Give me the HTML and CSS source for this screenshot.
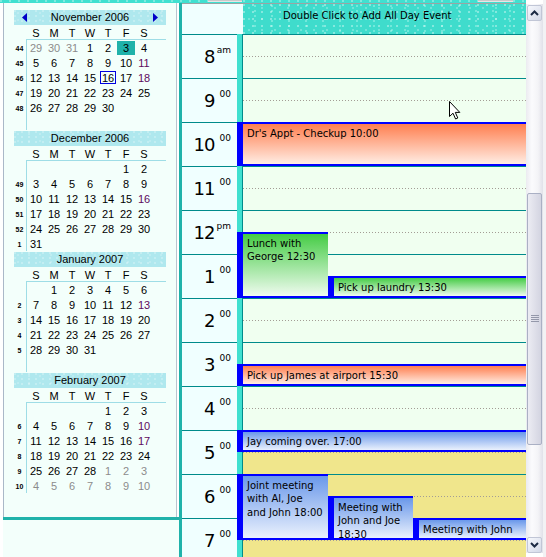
FILE: index.html
```html
<!DOCTYPE html>
<html>
<head>
<meta charset="utf-8">
<link rel="stylesheet" href="styles.css">
</head>
<body>
<div class="app">
  <div class="main">
    <div class="topstrip"><span class="tab tab1"></span><span class="tab tab2"></span></div>
    <div class="cols">
      <aside class="side">
        <div class="side-panel">
          <div class="month">
            <div class="mhead nav">
              <svg class="arr" width="6" height="9" viewBox="0 0 6 9"><polygon points="5,0 0,4.5 5,9" fill="#0000c8"/></svg>
              <span class="mtitle">November 2006</span>
              <svg class="arr" width="6" height="9" viewBox="0 0 6 9"><polygon points="1,0 6,4.5 1,9" fill="#0000c8"/></svg>
            </div>
            <div class="mnames"><span>S</span><span>M</span><span>T</span><span>W</span><span>T</span><span>F</span><span>S</span></div>
            <div class="mbody">
              <div class="wk"><span>44</span><span>45</span><span>46</span><span>47</span><span>48</span><span></span></div>
              <div class="days">
                <span class="d g">29</span><span class="d g">30</span><span class="d g">31</span><span class="d">1</span><span class="d">2</span><span class="d sel">3</span><span class="d">4</span>
                <span class="d">5</span><span class="d">6</span><span class="d">7</span><span class="d">8</span><span class="d">9</span><span class="d">10</span><span class="d p">11</span>
                <span class="d">12</span><span class="d">13</span><span class="d">14</span><span class="d">15</span><span class="d today">16</span><span class="d">17</span><span class="d p">18</span>
                <span class="d">19</span><span class="d">20</span><span class="d">21</span><span class="d">22</span><span class="d">23</span><span class="d">24</span><span class="d">25</span>
                <span class="d">26</span><span class="d">27</span><span class="d">28</span><span class="d">29</span><span class="d">30</span><span class="d"></span><span class="d"></span>
              </div>
            </div>
          </div>

          <div class="month">
            <div class="mhead"><span class="mtitle">December 2006</span></div>
            <div class="mnames"><span>S</span><span>M</span><span>T</span><span>W</span><span>T</span><span>F</span><span>S</span></div>
            <div class="mbody">
              <div class="wk"><span></span><span>49</span><span>50</span><span>51</span><span>52</span><span>1</span></div>
              <div class="days">
                <span class="d"></span><span class="d"></span><span class="d"></span><span class="d"></span><span class="d"></span><span class="d">1</span><span class="d">2</span>
                <span class="d">3</span><span class="d">4</span><span class="d">5</span><span class="d">6</span><span class="d">7</span><span class="d">8</span><span class="d">9</span>
                <span class="d">10</span><span class="d">11</span><span class="d">12</span><span class="d">13</span><span class="d">14</span><span class="d">15</span><span class="d p">16</span>
                <span class="d">17</span><span class="d">18</span><span class="d">19</span><span class="d">20</span><span class="d">21</span><span class="d">22</span><span class="d">23</span>
                <span class="d">24</span><span class="d">25</span><span class="d">26</span><span class="d">27</span><span class="d">28</span><span class="d">29</span><span class="d">30</span>
                <span class="d">31</span>
              </div>
            </div>
          </div>

          <div class="month">
            <div class="mhead"><span class="mtitle">January 2007</span></div>
            <div class="mnames"><span>S</span><span>M</span><span>T</span><span>W</span><span>T</span><span>F</span><span>S</span></div>
            <div class="mbody">
              <div class="wk"><span></span><span>2</span><span>3</span><span>4</span><span>5</span><span></span></div>
              <div class="days">
                <span class="d"></span><span class="d">1</span><span class="d">2</span><span class="d">3</span><span class="d">4</span><span class="d">5</span><span class="d">6</span>
                <span class="d">7</span><span class="d">8</span><span class="d">9</span><span class="d">10</span><span class="d">11</span><span class="d">12</span><span class="d p">13</span>
                <span class="d">14</span><span class="d">15</span><span class="d">16</span><span class="d">17</span><span class="d">18</span><span class="d">19</span><span class="d">20</span>
                <span class="d">21</span><span class="d">22</span><span class="d">23</span><span class="d">24</span><span class="d">25</span><span class="d">26</span><span class="d">27</span>
                <span class="d">28</span><span class="d">29</span><span class="d">30</span><span class="d">31</span>
              </div>
            </div>
          </div>

          <div class="month">
            <div class="mhead"><span class="mtitle">February 2007</span></div>
            <div class="mnames"><span>S</span><span>M</span><span>T</span><span>W</span><span>T</span><span>F</span><span>S</span></div>
            <div class="mbody">
              <div class="wk"><span></span><span>6</span><span>7</span><span>8</span><span>9</span><span>10</span></div>
              <div class="days">
                <span class="d"></span><span class="d"></span><span class="d"></span><span class="d"></span><span class="d">1</span><span class="d">2</span><span class="d">3</span>
                <span class="d">4</span><span class="d">5</span><span class="d">6</span><span class="d">7</span><span class="d">8</span><span class="d">9</span><span class="d p">10</span>
                <span class="d">11</span><span class="d">12</span><span class="d">13</span><span class="d">14</span><span class="d">15</span><span class="d">16</span><span class="d p">17</span>
                <span class="d">18</span><span class="d">19</span><span class="d">20</span><span class="d">21</span><span class="d">22</span><span class="d">23</span><span class="d">24</span>
                <span class="d">25</span><span class="d">26</span><span class="d">27</span><span class="d">28</span><span class="d g">1</span><span class="d g">2</span><span class="d g">3</span>
                <span class="d g">4</span><span class="d g">5</span><span class="d g">6</span><span class="d g">7</span><span class="d g">8</span><span class="d g">9</span><span class="d g">10</span>
              </div>
            </div>
          </div>
        </div>
        <div class="side-split"></div>
        <div class="side-bottom"></div>
      </aside>

      <section class="day">
        <div class="day-head">
          <div class="corner"></div>
          <div class="allday">Double Click to Add All Day Event</div>
        </div>
        <div class="day-body">
          <div class="times">
            <div class="hr"><span class="h">8</span><span class="s">am</span></div>
            <div class="hr"><span class="h">9</span><span class="s">00</span></div>
            <div class="hr"><span class="h">10</span><span class="s">00</span></div>
            <div class="hr"><span class="h">11</span><span class="s">00</span></div>
            <div class="hr"><span class="h">12</span><span class="s">pm</span></div>
            <div class="hr"><span class="h">1</span><span class="s">00</span></div>
            <div class="hr"><span class="h">2</span><span class="s">00</span></div>
            <div class="hr"><span class="h">3</span><span class="s">00</span></div>
            <div class="hr"><span class="h">4</span><span class="s">00</span></div>
            <div class="hr"><span class="h">5</span><span class="s">00</span></div>
            <div class="hr"><span class="h">6</span><span class="s">00</span></div>
            <div class="hr"><span class="h">7</span><span class="s">00</span></div>
          </div>
          <div class="bar"></div>
          <div class="grid">
            <div class="slot"></div>
            <div class="slot"></div>
            <div class="slot"></div>
            <div class="slot"></div>
            <div class="slot"></div>
            <div class="slot"></div>
            <div class="slot"></div>
            <div class="slot"></div>
            <div class="slot"></div>
            <div class="slot off"></div>
            <div class="slot off"></div>
            <div class="slot off"></div>
          </div>
          <div class="appts">
            <div class="appt orange" style="top:88px;left:0;width:289px;height:44px">Dr's Appt - Checkup 10:00</div>
            <div class="appt green" style="top:198px;left:0;width:91px;height:66px">Lunch with<br>George 12:30</div>
            <div class="appt green" style="top:242px;left:91px;width:198px;height:22px">Pick up laundry 13:30</div>
            <div class="appt orange" style="top:330px;left:0;width:289px;height:22px">Pick up James at airport 15:30</div>
            <div class="appt blue" style="top:396px;left:0;width:289px;height:22px">Jay coming over. 17:00</div>
            <div class="appt blue" style="top:440px;left:0;width:91px;height:66px">Joint meeting<br>with Al, Joe<br>and John 18:00</div>
            <div class="appt blue" style="top:462px;left:91px;width:85px;height:44px">Meeting with<br>John and Joe<br>18:30</div>
            <div class="appt blue" style="top:484px;left:176px;width:113px;height:22px">Meeting with John</div>
          </div>
          <svg class="cursor" width="13" height="20" viewBox="0 0 13 20"><path d="M0.5,0.5 L0.5,15.5 L4,12.2 L6.6,18 L8.8,17 L6.3,11.4 L10.8,11.4 Z" fill="#fff" stroke="#000" stroke-width="1" stroke-linejoin="miter"/></svg>
        </div>
      </section>
    </div>
  </div>

  <div class="vscroll">
    <div class="sb-btn"><svg width="9" height="6" viewBox="0 0 9 6"><polyline points="1,5 4.5,1.5 8,5" fill="none" stroke="#1c2a44" stroke-width="2"/></svg></div>
    <div class="sb-gap1"></div>
    <div class="sb-thumb"><svg width="8" height="8" viewBox="0 0 8 8"><path d="M0 0.5H8M0 2.5H8M0 4.5H8M0 6.5H8" stroke="#9498aa" stroke-width="1"/></svg></div>
    <div class="sb-gap2"></div>
    <div class="sb-btn"><svg width="9" height="6" viewBox="0 0 9 6"><polyline points="1,1 4.5,4.5 8,1" fill="none" stroke="#1c2a44" stroke-width="2"/></svg></div>
  </div>
  <div class="edge"></div>
</div>
</body>
</html>
```

FILE: styles.css
```css
* { box-sizing: border-box; }
html, body { margin: 0; padding: 0; }
body {
  width: 546px;
  height: 557px;
  overflow: hidden;
  background: #fff;
  font-family: "Liberation Sans", Arial, sans-serif;
  color: #000;
}

.app { display: flex; height: 557px; }
.main { width: 526px; display: flex; flex-direction: column; }

.topstrip {
  height: 3px;
  display: flex;
  background-color: #40e0d0;
  background-image:
    radial-gradient(circle at 1px 1px, rgba(255,255,255,.45) 0.6px, transparent 1px);
  background-size: 9px 3px;
  background-position: 0 0;
}
.tab { height: 2px; background: #c9c9c9; border-bottom: 1px solid #e6e6e6; }
.tab1 { margin-left: 208px; width: 34px; }
.tab2 { margin-left: 236px; width: 35px; }

.cols { flex: 1; display: flex; min-height: 0; }

/* ---------- side calendars ---------- */
.side { width: 179px; padding-left: 3px; display: flex; flex-direction: column; }
.side-panel {
  width: 174px;
  height: 514px;
  border-left: 1px solid #aab8c8;
  border-right: 1px solid #b8c4d0;
  background: #f3fffb;
  padding: 7px 0 0 10px;
}
.side-split { height: 3px; background: #20b2aa; }
.side-bottom { flex: 1; background: #f3fffb; }

.month { width: 152px; height: 120px; margin-bottom: 1px; }
.mhead {
  height: 15px;
  display: flex;
  align-items: flex-start;
  justify-content: center;
  font-size: 11px;
  line-height: 14px;
  background-color: #afe8ee;
  background-image:
    radial-gradient(circle at 1px 1px, rgba(255,255,255,.35) 0.6px, transparent 1px),
    radial-gradient(circle at 1px 1px, rgba(255,255,255,.25) 0.6px, transparent 1px);
  background-size: 7px 5px, 11px 7px;
  background-position: 0 0, 3px 2px;
}
.mhead.nav { justify-content: space-between; padding: 0 8px; }
.arr { margin-top: 3px; display: block; }

.mnames {
  margin-left: 12px;
  padding-left: 1px;
  height: 15px;
  border-bottom: 1px solid #9edde6;
  display: grid;
  grid-template-columns: repeat(7, 18px);
  font-size: 11px;
  line-height: 16px;
  text-align: center;
}

.mbody { display: flex; height: 90px; }
.wk {
  width: 12px;
  display: grid;
  grid-auto-rows: 15px;
  font-weight: bold;
  font-size: 7px;
  line-height: 17px;
  text-align: center;
  padding-right: 1px;
}
.days {
  width: 140px;
  border-left: 1px solid #9edde6;
  display: grid;
  grid-template-columns: repeat(7, 18px);
  grid-auto-rows: 15px;
  align-content: start;
  font-size: 11px;
  text-align: center;
}
.d { height: 15px; padding-top: 1px; line-height: 15px; }
.d.g { color: #8c8c8c; }
.d.p { color: #5e0a5e; }
.d.sel { background: #20b2aa; background-clip: content-box; }
.d.today { outline: 1px solid #0000e0; outline-offset: -2px; }

/* ---------- day view ---------- */
.day {
  flex: 1;
  display: flex;
  flex-direction: column;
  border-left: 3px solid #20b2aa;
  min-height: 0;
}
.day-head { height: 31px; border-top: 1px solid #9aa4a4; display: flex; }
.corner {
  width: 61px;
  background: #f0ffff;
}
.allday {
  flex: 1;
  font-family: "DejaVu Sans", Verdana, sans-serif;
  font-size: 10px;
  line-height: 13px;
  padding: 5px 0 0 40px;
  color: #000;
  background-color: #3fdccc;
  background-image:
    radial-gradient(circle at 1px 1px, rgba(255,255,255,.5) 0.6px, transparent 1px),
    radial-gradient(circle at 1px 1px, rgba(255,255,255,.35) 0.6px, transparent 1px),
    radial-gradient(circle at 1px 1px, rgba(200,255,245,.5) 0.6px, transparent 1px);
  background-size: 9px 7px, 13px 11px, 17px 5px;
  background-position: 0 0, 5px 3px, 11px 1px;
}

.day-body { flex: 1; position: relative; display: flex; overflow: hidden; }

.times { width: 55px; background: #f0ffff; }
.hr {
  height: 44px;
  border-top: 1px solid #008b8b;
  display: flex;
  justify-content: flex-end;
  align-items: flex-start;
  padding: 11px 6px 0 0;
  font-family: "DejaVu Sans", Verdana, sans-serif;
}
.h { font-size: 18px; line-height: 18px; letter-spacing: -1px; margin-top: 2px; margin-right: 0.5px; }
.s { font-size: 9px; line-height: 9px; width: 16px; text-align: right; }

.bar { width: 6px; background: #40e0d0; border-right: 1px solid #008b8b; }

.grid { flex: 1; }
.slot {
  height: 44px;
  border-top: 1px solid #008b8b;
  background-color: #f0fff0;
  background-image: linear-gradient(to right, #a39d95 1px, transparent 1px);
  background-size: 3px 1px;
  background-position: 0 21px;
  background-repeat: repeat-x;
}
.slot.off { background-color: #f0e68c; }

.appts { position: absolute; left: 55px; top: 0; right: 0; bottom: 0; }
.appt {
  position: absolute;
  border-top: 2px solid #0000ff;
  border-bottom: 2px solid #0000ff;
  border-left: 6px solid #0000ff;
  padding: 3px 4px 0 4px;
  font-family: "DejaVu Sans", Verdana, sans-serif;
  font-size: 10px;
  line-height: 13.3px;
  color: #000;
  white-space: nowrap;
  overflow: hidden;
}
.orange { background: linear-gradient(#ff7f50, #ffede4); }
.green { background: linear-gradient(#45cc45, #effbef); }
.blue { background: linear-gradient(#6a98ea, #eaf1fd); }

.cursor { position: absolute; left: 267px; top: 67px; }

/* ---------- scrollbar ---------- */
.vscroll {
  width: 17px;
  height: 549px;
  margin-top: 4px;
  padding: 1px 1px 0 1px;
  display: flex;
  flex-direction: column;
  background: linear-gradient(to right, #ebebf0, #fbfbfd 35%, #f4f4f7 70%, #e1e1e9);
}
.sb-btn {
  height: 16px;
  border: 1px solid #c1c6d6;
  border-radius: 2px;
  background: linear-gradient(135deg, #f6f8fd, #d4d9e8);
  display: flex;
  align-items: center;
  justify-content: center;
}
.sb-gap1 { height: 172px; }
.sb-thumb {
  height: 252px;
  border: 1px solid #aab0c4;
  border-radius: 2px;
  background: linear-gradient(to right, #ececf3, #d3d4e1);
  display: flex;
  align-items: center;
  justify-content: center;
}
.sb-gap2 { flex: 1; }
.edge { width: 3px; background: #f2f2f4; }
```
